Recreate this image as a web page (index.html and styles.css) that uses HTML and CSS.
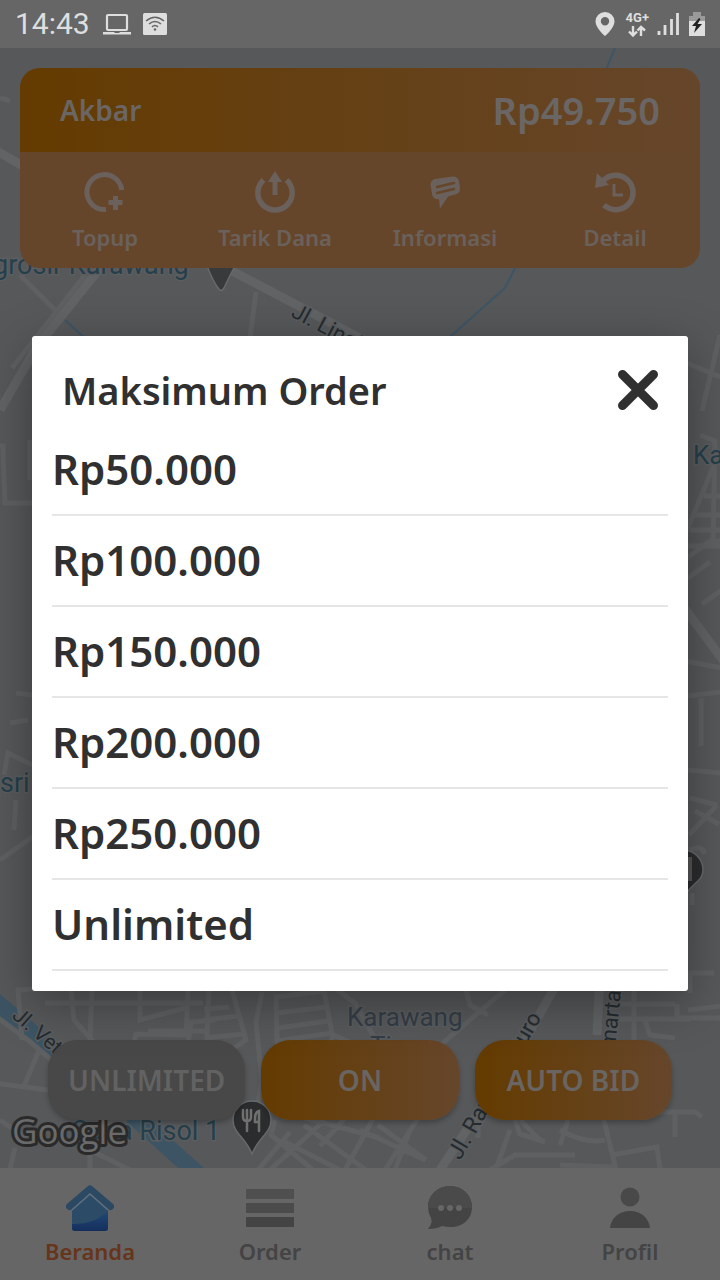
FILE: index.html
```html
<!DOCTYPE html>
<html lang="id">
<head>
<meta charset="utf-8">
<meta name="viewport" content="width=device-width, initial-scale=1">
<title>Maksimum Order</title>
<link rel="stylesheet" href="styles.css">
</head>
<body>
<div class="app">
  <header class="status">
    <span class="clock">14:43</span>
    <svg class="status-icon" width="28" height="24" viewBox="0 0 28 24" aria-hidden="true"><rect x="4" y="3" width="20" height="15" rx="1" fill="none" stroke="#dedede" stroke-width="2.2"/><path d="M0 20h11l1 1h4l1-1h11v2.500H0z" fill="#dedede"/></svg>
    <svg class="status-icon" width="24" height="24" viewBox="0 0 24 24" aria-hidden="true"><rect y="1" width="24" height="22" rx="1.500" fill="#dedede"/><g fill="none" stroke="#666" stroke-width="1.600"><path d="M3 9q9-7.500 18 0M6 12q6-5 12 0M9 14.800q3-2.600 6 0"/></g><circle cx="12" cy="17.500" r="1.300" fill="#666"/></svg>
    <span class="spacer"></span>
    <svg width="20" height="24" viewBox="0 0 20 24" aria-hidden="true"><path fill="#dedede" fill-rule="evenodd" d="M10 0a9.500 9.500 0 0 1 9.500 9.500C19.500 16 10 24 10 24S.5 16 .5 9.500A9.500 9.500 0 0 1 10 0zm0 5a4.200 4.200 0 1 0 0 8.400A4.200 4.200 0 0 0 10 5z"/></svg>
    <span class="network"><span>4G+</span>
      <svg width="18" height="12" viewBox="0 0 18 12" aria-hidden="true"><path d="M5 1v9M1 6.500l4 4 4-4M13 11V2M9.500 5.500 13 2l4 3.500" fill="none" stroke="#dedede" stroke-width="2.400"/></svg>
    </span>
    <svg width="22" height="24" viewBox="0 0 22 24" aria-hidden="true"><path d="M2 19v4M8 13v10M14.500 7v16M20.500 1v22" stroke="#dedede" stroke-width="2.800"/></svg>
    <svg class="battery" width="16" height="24" viewBox="0 0 16 24" aria-hidden="true"><path d="M4 0h8v4H4zM0 4h16v6H0z" fill="#9a9a9a"/><path d="M0 9h16v15H0z" fill="#dedede"/><path d="M10 6 3 14h4l-2 7 8-9H8.500l3-5z" fill="#222"/></svg>
  </header>

  <main class="home">
    <svg class="map" viewBox="0 48 720 1120" preserveAspectRatio="xMidYMid slice" aria-hidden="true">
      <rect y="48" width="720" height="1120" fill="#56585a"/>
      <g fill="none" stroke="#3d5566" stroke-width="2"><path d="M615 48 606 70M516 266l-11 22-55 49M65 320l24 22"/></g>
      <g fill="none" stroke="#3d5464" stroke-width="17"><path d="M-6 1000 60 1057M132 1115 200 1176"/></g>
      <g fill="none" stroke="#626365" stroke-width="9"><path d="M-5 150 30 170M215 262l160 84M100 268 36 348 0 410M520 1048l38-66M600 975l-3 60M440 1170l70-105M660 575l65 88"/></g>
      <g fill="none" stroke="#5f6062" stroke-width="5">
        <path d="M0 98l10 3M20 275l38 38M256 292l-6 46M85 275 12 368M0 446h3l2 57h27M30 480v-40M700 435l15 6-2 100"/>
        <path d="M680 360l40 17M720 335l-18 76M714 465l-34 82-3 40M704 496h20M694 515h30M690 530h30M687 546h36M680 563l30-22h12M685 580l25-18M702 604l20-14M680 660l42 8M688 696l32-4M701 698v48M688 770l32 3M690 798l27 7M717 805l-28 30M695 811l24 13M690 850q12-6 15 4M692 905v-12M686 973h28M690 973v20M688 1010l34-4M674 1018h55"/>
        <path d="M32 695l-16-2M28 720l-18 3M32 765l-24-12-4 22M0 860l35-25M14 830l2-30M-2 1018l30 22 35 30M22 1040l-4-50 32-2M45 1003h158M71 990l3 30 18 20-20 22M92 990l-2 50M40 1048l-16 38M-5 1083l60 8M140 985v35l45-12M188 990l-2 45-50-1-6 24M148 1031h60M215 1020l-24 2-4 30 42 4M209 990l-3 65M232 990l14 50-12 8M204 1020l35-4M206 1038l37-4M229 1007l-25 2M276 997l48-6 8 42-55 8zM277 1013l49-6M278 1028l50-7M276 997l2 70M325 1060l8-25 35 15M262 992l-6 30 6 60-12 60M335 988l20 15 25 45"/>
        <path d="M505 990l-68 58M466 990l4 15 18 10M620 1004h55M620 1019h70M634 990v50M645 1020l5 15 25 3M677 1004v15"/>
        <path d="M375 1115l-30 55M420 1115l-35 55M360 1130l65 30M378 1125l48 35M410 1130l-15 40M325 1120l-55 50M304 1125l62 45M285 1142l55 28M305 1118l75 20M345 1118l-25 28M258 1170l32-38M275 1120l-4 15 42 35M520 1120l20 20M515 1120l5 14 25 8M568 1120l-8 25M604 1120l12 50M560 1130q25 14 45 10M510 1130l-18 50M612 1155l45-8 3 22M655 1112h40l7 5M675 1112v25M490 1170l25-15h60M560 1165l55 2M478 1120v18M0 1120l26 18M10 1168l5-20M90 1170v-20l40 20"/>
      </g>
      <g fill="#2b2c2d" stroke="#67696a" stroke-width="1.500"><path d="M207 266q6 15 11 22 3 5 6 0 4-9 11-22z" fill="#393a3b"/><path d="M252 1101a19 19 0 0 1 19 19c0 13-13 18-19 34-6-16-19-21-19-34a19 19 0 0 1 19-19z"/><path d="M684 850a20 20 0 0 1 19 20c0 13-15 14-20 30z"/></g>
      <path d="M686 857h6v24h-6z" fill="#555"/>
      <g fill="none" stroke="#707070" stroke-width="2.500" stroke-linecap="round"><path d="M243 1110v7q0 4 4 4t4-4v-7M247 1110v21M259 1131v-20q-4 1-4 8v3h4"/></g>
      <g class="map-label">
        <text class="place" x="-7" y="274" font-size="27">grosir Karawang</text>
        <text class="place" x="693" y="464" font-size="26">Ka</text>
        <text class="place" x="0" y="792" font-size="27">sri</text>
        <text class="district" x="347" y="1026" font-size="26">Karawang</text>
        <text class="district" x="370" y="1055" font-size="26">Timur</text>
        <text class="place" x="72" y="1140" font-size="27">Saba Risol 1</text>
        <text class="street" font-size="22" transform="translate(290 316) rotate(28)">Jl. Lingkar</text>
        <text class="street" font-size="21" transform="translate(11 1017) rotate(41)">Jl. Vet</text>
        <text class="street" font-size="22" transform="translate(519 1057) rotate(-60)">Buro</text>
        <text class="street" font-size="22" transform="translate(615 1049) rotate(-84)">marta</text>
        <text class="street" font-size="23" transform="translate(460 1161) rotate(-60)">Jl. Raya</text>
      </g>
      <text class="google" x="12" y="1144">Google</text>
    </svg>

    <section class="wallet">
      <div class="wallet-top"><span class="name">Akbar</span><span class="balance">Rp49.750</span></div>
      <div class="wallet-actions">
        <button class="wallet-action" type="button">
          <svg width="44" height="44" viewBox="0 0 44 44" aria-hidden="true"><path d="M23 39.500A17.500 17.500 0 1 1 38.800 20M32.500 26v14M25.500 32.500h14" fill="none" stroke="currentColor" stroke-width="5"/></svg>Topup</button>
        <button class="wallet-action" type="button">
          <svg width="44" height="44" viewBox="0 0 44 44" aria-hidden="true"><path d="M10.500 10a17.200 17.200 0 1 0 23 0" fill="none" stroke="currentColor" stroke-width="5.500"/><path d="M22 1l-7 11h4.500v13h5V12H29z" fill="currentColor"/></svg>Tarik Dana</button>
        <button class="wallet-action" type="button">
          <svg width="44" height="44" viewBox="0 0 44 44" aria-hidden="true"><path d="M12 9 30 6.500q5 0 6 5l1 7q0 5-5 6l-7 2-8 12-1-9.500q-6 1-7-5L7.500 15q0-5 4.500-6z" fill="currentColor"/><path d="m14 17 17-4M14 23l17-4" stroke="#66462b" stroke-width="2.500" stroke-linecap="round"/></svg>Informasi</button>
        <button class="wallet-action" type="button">
          <svg width="44" height="44" viewBox="0 0 44 44" aria-hidden="true"><path d="M10 11a17.200 17.200 0 1 1 1 24" fill="none" stroke="currentColor" stroke-width="5.500"/><path d="M4 3 2 18l14-3z" fill="currentColor"/><path d="M21 14v11h9" fill="none" stroke="currentColor" stroke-width="3"/></svg>Detail</button>
      </div>
    </section>

    <div class="modes">
      <button class="mode mode-off" type="button">UNLIMITED</button>
      <button class="mode" type="button">ON</button>
      <button class="mode" type="button">AUTO BID</button>
    </div>
  </main>

  <nav class="tabs">
    <a class="tab tab-active" href="#beranda">
      <svg width="48" height="48" viewBox="0 0 48 48" aria-hidden="true"><defs><linearGradient id="wave" x1="0" y1="0" x2="0" y2="1"><stop offset="0" stop-color="#234b78"/><stop offset="1" stop-color="#142e5c"/></linearGradient></defs><path d="M3.500 22.500 24 5l20.500 17.500" fill="none" stroke="#2b4962" stroke-width="7" stroke-linecap="round" stroke-linejoin="round"/><path d="M6 26 24 10l18 16v18q0 3-3 3H9q-3 0-3-3z" fill="#2b4b66"/><path d="M6 40q25 0 36-14v18q0 3-3 3H9q-3 0-3-3z" fill="url(#wave)"/><path d="M6 26 24 10l18 16" fill="none" stroke="#607080" stroke-width="1.500"/></svg>Beranda</a>
    <a class="tab" href="#order">
      <svg width="48" height="48" viewBox="0 0 48 48" aria-hidden="true"><path d="M0 5h48v10H0z" fill="#4f4f4f"/><path d="M0 19h48v10H0z" fill="#4b4b4b"/><path d="M0 33h48v10H0z" fill="#444"/></svg>Order</a>
    <a class="tab" href="#chat">
      <svg width="48" height="48" viewBox="0 0 48 48" aria-hidden="true"><path d="M24 2c12 0 22 9 22 21S37 43 25 43q-5 0-9-1-5 3-14 3 5-6 3-11-3-5-3-11C2 11 12 2 24 2z" fill="#444"/><path d="M24 2c12 0 22 9 22 22H2C2 11 12 2 24 2z" fill="#4a4a4a"/><g fill="#666"><circle cx="15" cy="24" r="3"/><circle cx="24" cy="24" r="3"/><circle cx="33" cy="24" r="3"/></g></svg>chat</a>
    <a class="tab" href="#profil">
      <svg width="48" height="48" viewBox="0 0 48 48" aria-hidden="true"><circle cx="24" cy="13" r="9.500" fill="#494949"/><path d="M4 44c1-10 9-17 20-17s19 7 20 17z" fill="#444"/></svg>Profil</a>
  </nav>

  <div class="overlay">
    <section class="dialog" role="dialog" aria-modal="true" aria-labelledby="dialog-title">
      <div class="dialog-head">
        <h1 class="dialog-title" id="dialog-title">Maksimum Order</h1>
        <button class="close" type="button" aria-label="Tutup"><svg width="40" height="40" viewBox="0 0 40 40" aria-hidden="true"><path d="m4.500 4.500 31 31m0-31-31 31" stroke="#303030" stroke-width="9" stroke-linecap="round"/></svg></button>
      </div>
      <div class="options">
        <button class="option" type="button">Rp50.000</button>
        <button class="option" type="button">Rp100.000</button>
        <button class="option" type="button">Rp150.000</button>
        <button class="option" type="button">Rp200.000</button>
        <button class="option" type="button">Rp250.000</button>
        <button class="option" type="button">Unlimited</button>
      </div>
    </section>
  </div>
</div>
</body>
</html>
```
FILE: styles.css
```css
* { box-sizing: border-box; }
body { margin: 0; font-family: "Noto Sans", "Open Sans", sans-serif; font-weight: 600; }
button { border: 0; padding: 0; background: none; font: inherit; color: inherit; cursor: pointer; }
svg { display: block; flex: none; }

.app { position: relative; display: flex; flex-direction: column; min-height: 100vh; background: #666; }

.status { display: flex; align-items: center; gap: 8px; height: 48px; padding: 0 15px; background: #666; color: #dedede; font-family: Roboto, sans-serif; font-weight: 400; }
.clock { font-size: 30px; line-height: 48px; margin-right: 5px; }
.status-icon { margin-right: 4px; }
.spacer { flex: 1; }
.network { display: flex; flex-direction: column; align-items: center; margin-left: 3px; font-size: 13px; line-height: 14px; font-weight: 700; }
.battery { margin-left: 2px; }

.home { position: relative; flex: 1; display: flex; flex-direction: column; justify-content: space-between; padding: 20px 0 48px; overflow: hidden; }
.map { position: absolute; inset: 0; width: 100%; height: 100%; }
.map-label { font-family: Roboto, sans-serif; font-weight: 400; paint-order: stroke; stroke: #5b5d5f; stroke-width: 3px; }
.place { fill: #263f4b; }
.district { fill: #343d47; }
.street { fill: #252b2f; }
.google { font-family: "Open Sans", sans-serif; font-size: 35px; font-weight: 500; fill: #6a6a6a; stroke: #2a2a2a; stroke-width: 6px; stroke-linejoin: round; paint-order: stroke; }

.wallet { position: relative; margin: 0 20px; border-radius: 20px; overflow: hidden; background: #66462b; color: #6a6665; }
.wallet-top { display: flex; align-items: center; justify-content: space-between; height: 84px; padding: 0 40px; background: linear-gradient(90deg, #643b00, #66462b); }
.name { font-size: 28px; }
.balance { font-size: 38px; }
.wallet-actions { display: grid; grid-template-columns: repeat(4, 1fr); height: 116px; padding-top: 18px; color: #6a615c; }
.wallet-action { display: flex; flex-direction: column; align-items: center; font-size: 22px; line-height: 32px; padding-bottom: 16px; gap: 7px; }

.modes { position: relative; display: grid; grid-template-columns: repeat(3, 1fr); gap: 16px; margin: 0 48px; }
.mode { height: 80px; border-radius: 30px; background: linear-gradient(90deg, #643b00, #66462b); color: #696563; font-size: 28px; box-shadow: 0 3px 5px rgba(0, 0, 0, .25); white-space: nowrap; }
.mode-off { background: #484848; color: #626262; }

.tabs { display: grid; grid-template-columns: repeat(4, 1fr); height: 112px; padding-top: 16px; background: #666; }
.tab { display: flex; flex-direction: column; align-items: center; gap: 4px; color: #444; font-size: 22px; line-height: 30px; text-decoration: none; }
.tab-active { color: #66351b; }

.overlay { position: absolute; inset: 48px 0 0; display: flex; align-items: center; justify-content: center; padding: 0 32px 2px; }
.dialog { width: 100%; padding: 10px 20px 20px; border-radius: 3px; background: #fff; color: #303030; box-shadow: 0 12px 48px rgba(0, 0, 0, .35); }
.dialog-head { display: flex; align-items: center; justify-content: space-between; height: 88px; padding: 0 10px; }
.dialog-title { margin: 0; font-size: 38px; line-height: 56px; font-weight: 600; }
.close { display: block; }
.options { display: flex; flex-direction: column; margin-top: -9px; }
.option { height: 91px; border-bottom: 2px solid #e6e6e6; font-size: 42px; line-height: 56px; text-align: left; }
```
